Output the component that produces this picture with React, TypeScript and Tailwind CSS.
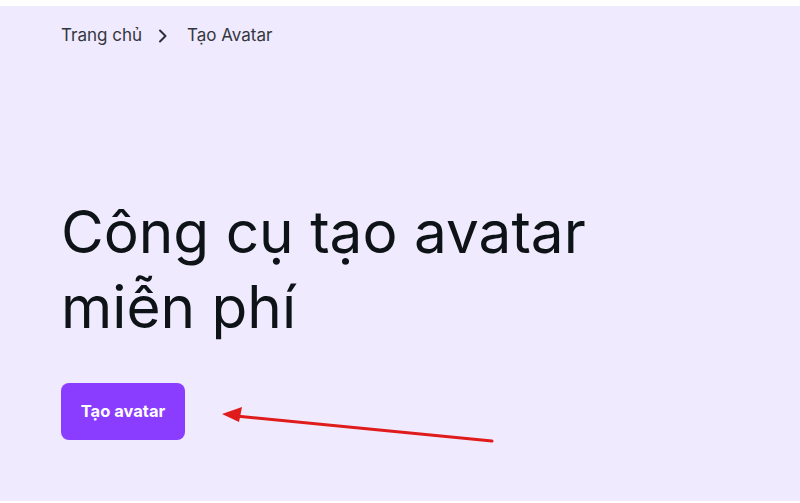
function Chevron() {
  return (
    <svg className="mr-[19px] ml-[16px]" width="10" height="14" viewBox="0 0 10 14" fill="none">
      <polyline points="2,1.5 7.5,7 2,12.5" stroke="#2c2f36" strokeWidth="2" strokeLinecap="round" strokeLinejoin="round" />
    </svg>
  )
}

function Breadcrumb() {
  return (
    <nav className="flex items-center text-[17px] text-[#34373e]">
      <span>Trang chủ</span>
      <Chevron />
      <span>Tạo Avatar</span>
    </nav>
  )
}

export default function App() {
  return (
    <div className="h-[503px] w-[800px] bg-white pt-[6px] pb-[2px] font-['Inter',sans-serif]">
      <div className="relative h-full bg-[#efeafd] pl-[61px] pt-[17px]">
        <Breadcrumb />

        <h1 className="mt-[145px] text-[58.5px] leading-[75px] font-normal text-[#0e1318]">
          Công cụ tạo avatar
          <br />
          miễn phí
        </h1>

        <button
          type="button"
          className="mt-[39px] flex h-[57px] w-[124px] items-center justify-center rounded-[8px] bg-[#8b3dff] text-[16.5px] font-bold text-white"
        >
          Tạo avatar
        </button>

        {/* red pointer arrow */}
        <svg className="pointer-events-none absolute left-0 top-0" width="800" height="503">
          <line x1="492" y1="435" x2="236" y2="410" stroke="#e01b1b" strokeWidth="3" strokeLinecap="round" />
          <polygon points="222,408 242,401 239,416" fill="#e01b1b" />
        </svg>
      </div>
    </div>
  )
}
